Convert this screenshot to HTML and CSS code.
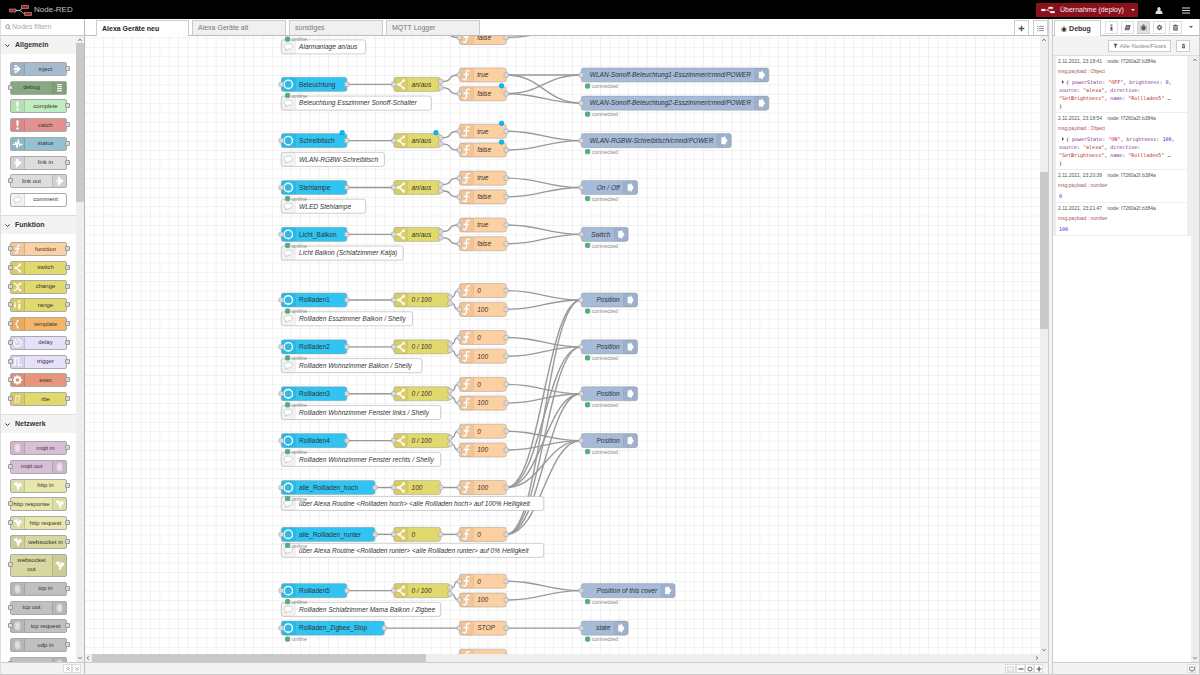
FILE: index.html
```html
<!DOCTYPE html>
<html lang="de">
<head>
<meta charset="utf-8">
<title>Node-RED</title>
<link rel="stylesheet" href="styles.css">
</head>
<body>
<svg class="sprite" aria-hidden="true">
  <symbol id="i-inject" viewBox="0 0 30 30"><path fill="currentColor" d="M8 5h5v5H8zM8 20h5v5H8zM6 12h8V6l9 9-9 9v-6H6z"/></symbol>
  <symbol id="i-debug" viewBox="0 0 30 30"><path fill="currentColor" d="M9 5h12v3H9zM9 10h12v3H9zM9 15h12v3H9zM9 20h12v4H9z" opacity=".85"/></symbol>
  <symbol id="i-alert" viewBox="0 0 30 30"><path fill="currentColor" d="M12 4h6l-1 14h-4zM12 21h6v5h-6z"/></symbol>
  <symbol id="i-status" viewBox="0 0 30 30"><path fill="none" stroke="currentColor" stroke-width="3" stroke-linejoin="round" d="M3 16h6l2-6 3 14 3-20 3 16 2-4h6"/></symbol>
  <symbol id="i-link" viewBox="0 0 30 30"><path fill="currentColor" d="M10 4c5 0 8 3 9 7h5v7h-5c-1 5-4 8-9 8l2-4-3-2 4-3H7v-4h6l-4-3 3-2z"/></symbol>
  <symbol id="i-comment" viewBox="0 0 30 30"><path fill="#fff" stroke="#ccc" stroke-width="2" d="M15 8c6 0 9 3 9 6s-4 6-9 6l-6 3 1-4c-3-1-4-3-4-5 0-3 4-6 9-6z"/></symbol>
  <symbol id="i-function" viewBox="0 0 30 30"><path fill="none" stroke="currentColor" stroke-width="3" d="M22 6c-4-2-7 0-7 4v11c0 4-3 5-7 3M9 14h11"/></symbol>
  <symbol id="i-switch" viewBox="0 0 30 30"><path fill="none" stroke="currentColor" stroke-width="3" d="M5 15h6c6 0 3-8 12-8M11 15c6 0 3 8 12 8"/><path fill="currentColor" d="M9 12h4v6H9zM19 4h4v6h-4zM19 20h4v6h-4z"/></symbol>
  <symbol id="i-change" viewBox="0 0 30 30"><path fill="none" stroke="currentColor" stroke-width="3" d="M6 7h4c5 0 6 16 11 16h2M6 23h4c5 0 6-16 11-16h2"/><path fill="currentColor" d="M20 3l6 4-6 4zM20 19l6 4-6 4z"/></symbol>
  <symbol id="i-range" viewBox="0 0 30 30"><path fill="currentColor" d="M7 8h4v3H7zM7 13h4v8H7zM17 4h5v5h-5zM17 12h5v13h-5z"/></symbol>
  <symbol id="i-template" viewBox="0 0 30 30"><path fill="none" stroke="currentColor" stroke-width="3" d="M19 5c-4 0-5 1-5 4s0 5-4 6c4 1 4 3 4 6s1 4 5 4"/></symbol>
  <symbol id="i-delay" viewBox="0 0 30 30"><path fill="none" stroke="currentColor" stroke-width="3" d="M15 6a9 9 0 1 1-8 5M8 6l7 9"/></symbol>
  <symbol id="i-trigger" viewBox="0 0 30 30"><path fill="none" stroke="currentColor" stroke-width="3" d="M4 23h5V6h9v17h8"/></symbol>
  <symbol id="i-gear" viewBox="0 0 30 30"><circle cx="15" cy="15" r="7" fill="none" stroke="currentColor" stroke-width="5"/><path stroke="currentColor" stroke-width="4" d="M15 3v5M15 22v5M3 15h5M22 15h5M7 7l3 3M20 20l3 3M23 7l-3 3M10 20l-3 3"/></symbol>
  <symbol id="i-rbe" viewBox="0 0 30 30"><path fill="none" stroke="currentColor" stroke-width="2" d="M7 23h4V7h12M13 23h6V7"/></symbol>
  <symbol id="i-waves" viewBox="0 0 30 30"><path fill="none" stroke="currentColor" stroke-width="2" opacity=".8" d="M15 4c4 6 4 16 0 22c-4-6-4-16 0-22zM15 9v12M19 6c3 6 3 12 0 18M11 6c-3 6-3 12 0 18"/></symbol>
  <symbol id="i-globe" viewBox="0 0 30 30"><path fill="currentColor" d="M6 9l5-4 5 2-1 3 3 1 2-5 5 4 1 6-4-1-2 5-3 6-3-2 1-5-4-2 2-3-4-2-3 1z"/></symbol>
  <symbol id="i-echo" viewBox="0 0 30 30"><circle cx="15" cy="15" r="9" fill="none" stroke="currentColor" stroke-width="3"/><path fill="currentColor" d="M12 22h6l-3 4z"/></symbol>
  <symbol id="i-bridge" viewBox="0 0 30 30"><path fill="currentColor" d="M9 8h6V4l7 11-7 11v-4H9z"/></symbol>
  <symbol id="i-bug" viewBox="0 0 16 16"><path fill="currentColor" d="M5 4a3 3 0 0 1 6 0zM4 5h8v6a4 4 0 0 1-8 0z"/><path stroke="currentColor" stroke-width="1.500" d="M1 4l3 3M15 4l-3 3M0 9h16M1 15l3-3M15 15l-3-3"/></symbol>
  <symbol id="i-trash" viewBox="0 0 16 16"><path fill="currentColor" d="M2 3h4V1h4v2h4v2H2zM3 6h10v9H3z"/><path stroke="#fff" d="M6 7v6M8 7v6M10 7v6"/></symbol>
  <symbol id="i-book" viewBox="0 0 16 16"><path fill="currentColor" d="M5 2h10l-3 12H2c-1 0-1-2 0-3z"/><path stroke="#fff" d="M6 5h6M5 8h6M3 12h8"/></symbol>
  <symbol id="i-flow" viewBox="0 0 46 22"><path fill="none" stroke="currentColor" stroke-width="2" d="M14 11h6c6 0 4-7 10-7M20 11c6 0 6 7 14 7"/><path class="logo-box" d="M1 8h13v6H1zM25 1h14v6H25zM31 15h14v6H31z"/></symbol>
  <symbol id="i-chev" viewBox="0 0 10 10"><path fill="none" stroke="currentColor" stroke-width="2" d="M1 3l4 4 4-4"/></symbol>
</svg>

<header class="topbar">
  <svg class="logo"><use href="#i-flow"/></svg>
  <span class="brand">Node-RED</span>
  <div class="top-actions">
    <button class="deploy"><svg class="deploy-icon"><use href="#i-flow"/></svg><span>Übernahme (deploy)</span><i class="caret"></i></button>
    <button class="top-btn" aria-label="Benutzer"><svg viewBox="0 0 16 16"><path fill="#ddd" d="M8 1a4 4 0 0 1 2 7c4 0 5 3 5 7H1c0-4 1-7 5-7a4 4 0 0 1 2-7z"/></svg></button>
    <button class="top-btn" aria-label="Menü"><svg viewBox="0 0 16 16"><path fill="#ddd" d="M0 2h16v2H0zM0 7h16v2H0zM0 12h16v2H0z"/></svg></button>
  </div>
</header>

<main class="main">
  <aside class="palette">
    <label class="search">
      <svg viewBox="0 0 16 16"><circle cx="7" cy="7" r="5" fill="none" stroke="#777" stroke-width="2"/><path stroke="#777" stroke-width="2" d="M10 10l5 5"/></svg>
      <input type="text" placeholder="Nodes filtern" aria-label="Nodes filtern">
    </label>
    <div class="palette-body">
      <div class="palette-scroll">
        <section class="category">
          <h2><svg><use href="#i-chev"/></svg>Allgemein</h2>
          <div class="items items-8">
            <div class="item inject out"><svg><use href="#i-inject"/></svg><span>inject</span></div>
            <div class="item debug in flip"><svg><use href="#i-debug"/></svg><span>debug</span></div>
            <div class="item complete out"><svg><use href="#i-alert"/></svg><span>complete</span></div>
            <div class="item catch out"><svg><use href="#i-alert"/></svg><span>catch</span></div>
            <div class="item status out"><svg><use href="#i-status"/></svg><span>status</span></div>
            <div class="item link out"><svg><use href="#i-link"/></svg><span>link in</span></div>
            <div class="item link in flip"><svg><use href="#i-link"/></svg><span>link out</span></div>
            <div class="item comment"><svg><use href="#i-comment"/></svg><span>comment</span></div>
          </div>
        </section>
        <section class="category">
          <h2><svg><use href="#i-chev"/></svg>Funktion</h2>
          <div class="items items-9">
            <div class="item function in out"><svg><use href="#i-function"/></svg><span>function</span></div>
            <div class="item switch in out"><svg><use href="#i-switch"/></svg><span>switch</span></div>
            <div class="item switch in out"><svg><use href="#i-change"/></svg><span>change</span></div>
            <div class="item switch in out"><svg><use href="#i-range"/></svg><span>range</span></div>
            <div class="item template in out"><svg><use href="#i-template"/></svg><span>template</span></div>
            <div class="item delay in out"><svg><use href="#i-delay"/></svg><span>delay</span></div>
            <div class="item delay in out"><svg><use href="#i-trigger"/></svg><span>trigger</span></div>
            <div class="item exec in out"><svg><use href="#i-gear"/></svg><span>exec</span></div>
            <div class="item switch in out"><svg><use href="#i-rbe"/></svg><span>rbe</span></div>
          </div>
        </section>
        <section class="category">
          <h2><svg><use href="#i-chev"/></svg>Netzwerk</h2>
          <div class="items items-12">
            <div class="item mqtt out"><svg><use href="#i-waves"/></svg><span>mqtt in</span></div>
            <div class="item mqtt in flip"><svg><use href="#i-waves"/></svg><span>mqtt out</span></div>
            <div class="item http out"><svg><use href="#i-globe"/></svg><span>http in</span></div>
            <div class="item http in flip"><svg><use href="#i-globe"/></svg><span>http response</span></div>
            <div class="item http in out"><svg><use href="#i-globe"/></svg><span>http request</span></div>
            <div class="item websocket out"><svg><use href="#i-globe"/></svg><span>websocket in</span></div>
            <div class="item websocket in flip tall"><svg><use href="#i-globe"/></svg><span>websocket<br>out</span></div>
            <div class="item tcp out"><svg><use href="#i-waves"/></svg><span>tcp in</span></div>
            <div class="item tcp in flip"><svg><use href="#i-waves"/></svg><span>tcp out</span></div>
            <div class="item tcp in out"><svg><use href="#i-waves"/></svg><span>tcp request</span></div>
            <div class="item tcp out"><svg><use href="#i-waves"/></svg><span>udp in</span></div>
            <div class="item tcp in flip"><svg><use href="#i-waves"/></svg></div>
          </div>
        </section>
      </div>
      <div class="vscroll"><svg class="up"><use href="#i-chev"/></svg><div class="track"><div class="thumb palette-thumb"></div></div><svg><use href="#i-chev"/></svg></div>
    </div>
    <footer class="foot">
      <button aria-label="Alle zuklappen"><svg viewBox="0 0 10 10"><path fill="none" stroke="#888" d="M2 5l3-3 3 3M2 8l3-3 3 3"/></svg></button>
      <button aria-label="Alle aufklappen"><svg viewBox="0 0 10 10"><path fill="none" stroke="#888" d="M2 2l3 3 3-3M2 5l3 3 3-3"/></svg></button>
    </footer>
  </aside>

  <section class="workspace">
    <nav class="tabs">
      <button class="tab active">Alexa Geräte neu</button>
      <button class="tab">Alexa Geräte alt</button>
      <button class="tab">sonstiges</button>
      <button class="tab">MQTT Logger</button>
      <span class="tab-tools">
        <button aria-label="Flow hinzufügen"><svg viewBox="0 0 10 10"><path stroke="#555" stroke-width="2" d="M1 5h8M5 1v8"/></svg></button>
        <button aria-label="Flows auflisten"><svg viewBox="0 0 10 10"><path stroke="#666" d="M0 2h2M3 2h7M0 5h2M3 5h7M0 8h2M3 8h7"/></svg></button>
      </span>
    </nav>
    <div class="canvas-row">
      <svg class="canvas" id="canvas">
        <defs><pattern id="grid" width="20" height="20" patternUnits="userSpaceOnUse"><path d="M0 0H20M0 0V20" class="grid-line"/></pattern></defs>
      </svg>
      <div class="vscroll"><svg class="up"><use href="#i-chev"/></svg><div class="track"><div class="thumb canvas-thumb"></div></div><svg><use href="#i-chev"/></svg></div>
    </div>
    <div class="hscroll"><svg class="left"><use href="#i-chev"/></svg><div class="track"><div class="thumb"></div></div><svg class="right"><use href="#i-chev"/></svg></div>
    <footer class="foot">
      <button class="map" aria-label="Navigator"><svg viewBox="0 0 16 10"><path fill="#eef3f8" stroke="#9ab" stroke-dasharray="3 1" d="M2 1h12v8H2z"/></svg></button>
      <button aria-label="Verkleinern"><svg viewBox="0 0 10 10"><path stroke="#555" stroke-width="2" d="M1 5h8"/></svg></button>
      <button aria-label="Originalgröße"><svg viewBox="0 0 10 10"><circle cx="5" cy="5" r="3.500" fill="none" stroke="#555" stroke-width="1.500"/></svg></button>
      <button aria-label="Vergrößern"><svg viewBox="0 0 10 10"><path stroke="#555" stroke-width="2" d="M1 5h8M5 1v8"/></svg></button>
    </footer>
  </section>

  <div class="separator"></div>

  <aside class="sidebar">
    <nav class="side-tabs">
      <button class="side-tab"><svg><use href="#i-bug"/></svg>Debug</button>
      <span class="side-icons">
        <button aria-label="Information"><svg viewBox="0 0 16 16"><path fill="#555" d="M6 1h4v3H6zM5 6h5v7h1v2H5v-2h1V8H5z"/></svg></button>
        <button aria-label="Hilfe"><svg><use href="#i-book"/></svg></button>
        <button class="on" aria-label="Debug"><svg><use href="#i-bug"/></svg></button>
        <button aria-label="Konfiguration"><svg><use href="#i-gear"/></svg></button>
        <button aria-label="Kontext"><svg><use href="#i-trash"/></svg></button>
      </span>
      <button class="side-caret" aria-label="Mehr"><i class="caret"></i></button>
    </nav>
    <div class="debug-tools">
      <button><svg viewBox="0 0 16 16"><path fill="#555" d="M1 1h14l-5 6v8l-4-3V7z"/></svg>Alle Nodes/Flows</button>
      <button class="clear" aria-label="Löschen"><svg><use href="#i-trash"/></svg></button>
    </div>
    <div class="debug-body">
      <div class="messages">
        <article class="msg">
          <p class="meta"><span>2.11.2021, 23:18:41</span><span>node: f7260a2f.b384a</span></p>
          <p class="topic">msg.payload : Object</p>
          <div class="payload"><div class="first"><i class="tri"></i>{ <b>powerState</b>: <q>"OFF"</q>, <b>brightness</b>: <var>0</var>,</div><div><b>source</b>: <q>"alexa"</q>, <b>directive</b>:</div><div><q>"SetBrightness"</q>, <b>name</b>: <q>"Rollladen5"</q> …</div><div>}</div></div>
        </article>
        <article class="msg">
          <p class="meta"><span>2.11.2021, 23:18:54</span><span>node: f7260a2f.b384a</span></p>
          <p class="topic">msg.payload : Object</p>
          <div class="payload"><div class="first"><i class="tri"></i>{ <b>powerState</b>: <q>"ON"</q>, <b>brightness</b>: <var>100</var>,</div><div><b>source</b>: <q>"alexa"</q>, <b>directive</b>:</div><div><q>"SetBrightness"</q>, <b>name</b>: <q>"Rollladen5"</q> …</div><div>}</div></div>
        </article>
        <article class="msg">
          <p class="meta"><span>2.11.2021, 23:20:39</span><span>node: f7260a2f.b384a</span></p>
          <p class="topic">msg.payload : number</p>
          <div class="payload"><var>0</var></div>
        </article>
        <article class="msg">
          <p class="meta"><span>2.11.2021, 23:21:47</span><span>node: f7260a2f.b384a</span></p>
          <p class="topic">msg.payload : number</p>
          <div class="payload"><var>100</var></div>
        </article>
      </div>
      <div class="vscroll"><svg class="up"><use href="#i-chev"/></svg><div class="track"></div><svg><use href="#i-chev"/></svg></div>
    </div>
    <footer class="foot"><button aria-label="Fenster"><svg viewBox="0 0 16 14"><path fill="none" stroke="#666" stroke-width="2" d="M1 2h14v8H1zM5 13h6"/></svg></button></footer>
  </aside>
</main>
<script src="flow.js"></script>
</body>
</html>
```
FILE: styles.css
```css
*, *::before, *::after { box-sizing: border-box; }
body {
  margin: 0;
  height: 100vh;
  display: flex;
  flex-direction: column;
  overflow: hidden;
  font: 7px/10px "Liberation Sans", Arial, sans-serif;
  color: #444;
  background: #f3f3f3;
}
button {
  font: inherit;
  color: inherit;
  margin: 0;
  padding: 0;
  border: 1px solid #ccc;
  background: #fff;
  display: flex;
  align-items: center;
  justify-content: center;
}
h2, p { margin: 0; }
svg { display: block; flex: none; }
.sprite { width: 0; height: 0; position: absolute; }

/* header */
.topbar {
  flex: none;
  height: 19px;
  background: #000;
  display: flex;
  align-items: center;
  padding: 1px 8px 0 9px;
}
.logo { width: 23px; height: 11px; color: #bbb; }
.logo-box { fill: #b22222; stroke: #ccc; }
.brand { margin-left: 2px; font-size: 8px; color: #c7c7c7; }
.top-actions { margin-left: auto; display: flex; align-items: center; }
.deploy { height: 14px; width: 102px; background: #8c101c; border: 0; color: #eee; gap: 5px; margin-right: 15px; justify-content: flex-start; padding-left: 5px; }
.deploy-icon { width: 14px; height: 8px; color: #fff; }
.deploy-icon { --box: #fff; }
.deploy-icon use { fill: #fff; }
.deploy .caret { margin-left: 2px; border-top-color: #eee; }
.caret { width: 0; height: 0; border: 2px solid transparent; border-top: 2px solid #555; border-bottom: 0; }
.logo { --box: #b22222; }
.logo-box { fill: var(--box); }
.top-btn { border: 0; background: none; width: 12px; height: 12px; }
.top-btn svg { width: 8px; height: 9px; }
.top-btn + .top-btn { margin-left: 15px; }

.main { flex: 1; min-height: 0; display: flex; border-bottom: 1px solid #ccc; }

/* palette */
.palette { flex: none; width: 85px; display: flex; flex-direction: column; border-right: 1px solid #bbb; border-left: 1px solid #ddd; background: #fff; }
.search { flex: none; height: 17px; display: flex; align-items: center; gap: 1px; padding-left: 4px; border-bottom: 1px solid #ccc; }
.search svg { width: 6px; height: 6px; }
.search input { border: 0; padding: 0; width: 60px; font: inherit; background: none; outline: 0; }
.search input::placeholder { color: #aaa; opacity: 1; }
.palette-body { flex: 1; min-height: 0; display: flex; }
.palette-scroll { flex: 1; overflow: hidden; }
.category { border-bottom: 1px solid #ddd; }
.category h2 { height: 18px; display: flex; align-items: center; gap: 5px; padding-left: 4px; background: #f3f3f3; font-size: 7px; color: #333; }
.category h2 svg { width: 5px; height: 5px; }
.items { display: flex; flex-direction: column; justify-content: space-between; margin: 8px 8px 8px 9px; }
.items-8 { height: 145px; }
.items-9 { height: 164px; }
.items-12 { height: 230px; }
.item { position: relative; flex: none; height: 14px; width: 57px; display: flex; border: 1px solid #aaa; border-radius: 2px; color: #fff; }
.item span { flex: 1; align-self: center; text-align: center; font-size: 6px; line-height: 9px; color: #333; white-space: nowrap; margin: 0 -4px; z-index: 1; }
.item svg { width: 14px; height: 100%; background: rgba(0, 0, 0, .05); border-right: 1px solid rgba(0, 0, 0, .1); }
.item.flip { flex-direction: row-reverse; }
.item.flip svg { border-right: 0; border-left: 1px solid rgba(0, 0, 0, .1); }
.item.tall { height: 23px; }
.item.in::before, .item.out::after { content: ""; position: absolute; top: 50%; width: 5px; height: 5px; margin-top: -3px; background: #d9d9d9; border: 1px solid #999; border-radius: 1px; }
.item.in::before { left: -3px; }
.item.out::after { right: -4px; }
.inject { background: #a6bbcf; }
.debug { background: #87a980; }
.complete { background: #c0edc0; }
.catch { background: #e49191; }
.status { background: #94c1d0; }
.link { background: #ddd; }
.comment { background: #fff; }
.function { background: #fdd0a2; }
.switch { background: #e2d96e; }
.template { background: #f3b567; }
.delay { background: #e6e0f8; }
.exec { background: #e7967c; }
.mqtt { background: #d8bfd8; }
.http { background: #e7e7ae; }
.websocket { background: #d7d7a0; }
.tcp { background: #c0c0c0; }

/* scrollbars */
.vscroll { flex: none; width: 8px; display: flex; flex-direction: column; align-items: center; background: #eee; padding: 1px 0; }
.vscroll svg, .hscroll svg { width: 4px; height: 6px; color: #444; }
.vscroll .up { transform: rotate(180deg); }
.vscroll .track { flex: 1; align-self: stretch; }
.thumb { background: #c9c9c9; }
.palette-thumb { height: 26%; }
.canvas-thumb { height: 26%; margin-top: 129px; }
.hscroll { flex: none; height: 8px; display: flex; align-items: center; background: #eee; padding: 0 9px 0 1px; }
.hscroll .track { flex: 1; height: 100%; margin: 0 2px; }
.hscroll .thumb { width: 334px; height: 100%; }
.hscroll .left { transform: rotate(90deg); }
.hscroll .right { transform: rotate(-90deg); }

.foot { flex: none; height: 12px; display: flex; align-items: center; justify-content: flex-end; border-top: 1px solid #ccc; background: #f3f3f3; padding-right: 3px; }
.foot button { width: 9px; height: 9px; border-color: #ddd; }
.foot svg { width: 6px; height: 6px; }

/* workspace */
.workspace { flex: 1; min-width: 0; display: flex; flex-direction: column; background: #fff; }
.workspace .foot { padding-right: 5px; }
.foot .map { width: 11px; }
.foot .map svg { width: 9px; }
.tabs { flex: none; height: 17px; display: flex; align-items: flex-end; gap: 3px; padding-left: 11px; border-bottom: 1px solid #bbb; }
.tab { width: 94px; height: 15px; justify-content: flex-start; padding-left: 5px; border-bottom: 0; background: #f0f0f0; color: #777; }
.tab.active { background: #fff; color: #222; font-weight: bold; height: 16px; margin-bottom: -1px; width: 93px; }
.tab-tools { margin-left: auto; display: flex; gap: 4px; }
.tab-tools button { width: 15px; height: 15px; border-bottom: 0; }
.tab-tools svg { width: 7px; height: 7px; }
.canvas-row { flex: 1; min-height: 0; display: flex; }
.canvas { flex: 1; min-width: 0; width: 0; height: 100%; }
.grid-line { stroke: #e4e4e4; stroke-width: 2; fill: none; }
.wire { fill: none; stroke: #999; stroke-width: 3; }
.node { color: #fff; }
.node .box { stroke: #999; }
.node .shade { fill: #000; fill-opacity: .05; }
.node .edge { stroke: #000; stroke-opacity: .12; }
.node .port { fill: #d9d9d9; stroke: #999; }
.node .label { font-size: 14px; fill: #333; font-style: italic; }
.node .flip { text-anchor: end; }
.node .changed { fill: #00bcff; stroke: #0088c4; }
.node .dot { fill: #5a8; stroke: #5a8; stroke-width: 2; }
.node .state { font-size: 12px; fill: #888; }
.echo .box { fill: #30c4f2; }
.echo .label { font-style: normal; }
.branch .box { fill: #e2d96e; }
.fn .box { fill: #fdd0a2; }
.send .box { fill: #a6bbd7; }
.note .box { fill: #fff; }

/* debug sidebar */
.separator { flex: none; width: 5px; border: 1px solid #ccc; border-width: 0 1px; background: #f3f3f3; }
.sidebar { flex: none; width: 147px; display: flex; flex-direction: column; background: #fff; border-right: 1px solid #ccc; }
.side-tabs { flex: none; height: 17px; display: flex; align-items: flex-end; border-bottom: 1px solid #bbb; padding-left: 1px; }
.side-tab { width: 47px; height: 16px; margin-bottom: -1px; border-bottom: 0; font-weight: bold; color: #333; gap: 2px; padding-right: 3px; }
.side-tab svg { width: 6px; height: 6px; }
.side-icons { display: flex; gap: 3px; margin-left: 4px; align-self: center; }
.side-icons button { width: 13px; height: 13px; color: #555; border-color: #ddd; }
.side-icons svg { width: 7px; height: 7px; }
.side-icons .on { background: #e2e2e2; border-color: #ccc; }
.side-caret { margin: 0 6px 0 auto; border: 0; align-self: center; }
.debug-tools { flex: none; height: 20px; display: flex; align-items: center; justify-content: flex-end; gap: 5px; padding-right: 9px; background: #f3f3f3; border-bottom: 1px solid #ddd; }
.debug-tools button { width: 63px; height: 12px; gap: 2px; font-size: 6px; color: #888; }
.debug-tools svg { width: 5px; height: 6px; color: #555; }
.debug-tools .clear { width: 14px; }
.debug-body { flex: 1; min-height: 0; display: flex; }
.messages { flex: 1; min-width: 0; }
.msg { border: solid #eee; border-width: 0 4px 1px 3px; padding: 1px 0 2px 2px; font-size: 5px; }
.meta { display: flex; gap: 5px; line-height: 9px; color: #555; }
.topic { line-height: 10px; color: #a55; }
.payload { margin: 2px 0 0 1px; font: 5px/8px "DejaVu Sans Mono", monospace; color: #333; white-space: nowrap; }
.payload .first { display: flex; align-items: center; white-space: pre; }
.tri { border: 2px solid transparent; border-left: 2px solid #555; border-right: 0; margin: 0 2px 0 3px; }
.payload b { font-weight: normal; color: #792e90; }
.payload q { quotes: none; color: #b72828; }
.payload var { font-style: normal; color: #2033d6; }
```
FILE: flow.js
```js
const NS = "http://www.w3.org/2000/svg";
const ZOOM = 0.46875;
const SCROLL = { x: 85, y: 36 };

// type, left, centre y, width, label, options
const nodes = [
  ["note", 600, 100, 180, "Alarmanlage an/aus"],
  ["note", 600, 220, 320, "Beleuchtung Esszimmer Sonoff-Schalter"],
  ["note", 600, 340, 220, "WLAN-RGBW-Schreibtisch"],
  ["note", 600, 440, 180, "WLED Stehlampe"],
  ["note", 600, 540, 260, "Licht Balkon (Schlafzimmer Katja)"],
  ["note", 600, 680, 280, "Rollladen Esszimmer Balkon / Shelly"],
  ["note", 600, 780, 300, "Rollladen Wohnzimmer Balkon / Shelly"],
  ["note", 600, 880, 340, "Rollladen Wohnzimmer Fenster links / Shelly"],
  ["note", 600, 980, 340, "Rollladen Wohnzimmer Fenster rechts / Shelly"],
  ["note", 600, 1074, 560, "über Alexa Routine <Rollladen hoch> <alle Rollladen hoch> auf 100% Helligkeit"],
  ["note", 600, 1174, 560, "über Alexa Routine <Rollladen runter> <alle Rollladen runter> auf 0% Helligkeit"],
  ["note", 600, 1300, 340, "Rollladen Schlafzimmer Mama Balkon / Zigbee"],

  ["echo", 600, 60, 140, "", { state: "online" }],
  ["echo", 600, 180, 140, "Beleuchtung", { state: "online" }],
  ["echo", 600, 300, 140, "Schreibtisch", { changed: true }],
  ["echo", 600, 400, 140, "Stehlampe", { state: "online" }],
  ["echo", 600, 500, 140, "Licht_Balkon", { state: "online" }],
  ["echo", 600, 640, 140, "Rollladen1", { state: "online" }],
  ["echo", 600, 740, 140, "Rollladen2", { state: "online" }],
  ["echo", 600, 840, 140, "Rollladen3", { state: "online" }],
  ["echo", 600, 940, 140, "Rollladen4", { state: "online" }],
  ["echo", 600, 1040, 200, "alle_Rollladen_hoch", { state: "online" }],
  ["echo", 600, 1140, 200, "alle_Rollladen_runter", { state: "online" }],
  ["echo", 600, 1260, 140, "Rollladen5", { state: "online" }],
  ["echo", 600, 1340, 220, "Rollladen_Zigbee_Stop", { state: "online" }],

  ["branch", 840, 180, 100, "an/aus", { outs: 2 }],
  ["branch", 840, 300, 100, "an/aus", { outs: 2, changed: true }],
  ["branch", 840, 400, 100, "an/aus", { outs: 2 }],
  ["branch", 840, 500, 100, "an/aus", { outs: 2 }],
  ["branch", 840, 640, 120, "0 / 100", { outs: 2 }],
  ["branch", 840, 740, 120, "0 / 100", { outs: 2 }],
  ["branch", 840, 840, 120, "0 / 100", { outs: 2 }],
  ["branch", 840, 940, 120, "0 / 100", { outs: 2 }],
  ["branch", 840, 1040, 100, "100"],
  ["branch", 840, 1140, 100, "0"],
  ["branch", 840, 1260, 120, "0 / 100", { outs: 2 }],

  ["fn", 980, 80, 100, "false"],
  ["fn", 980, 160, 100, "true"],
  ["fn", 980, 200, 100, "false", { changed: true }],
  ["fn", 980, 280, 100, "true", { changed: true }],
  ["fn", 980, 320, 100, "false", { changed: true }],
  ["fn", 980, 380, 100, "true"],
  ["fn", 980, 420, 100, "false"],
  ["fn", 980, 480, 100, "true"],
  ["fn", 980, 520, 100, "false"],
  ["fn", 980, 620, 100, "0"],
  ["fn", 980, 660, 100, "100"],
  ["fn", 980, 720, 100, "0"],
  ["fn", 980, 760, 100, "100"],
  ["fn", 980, 820, 100, "0"],
  ["fn", 980, 860, 100, "100"],
  ["fn", 980, 920, 100, "0"],
  ["fn", 980, 960, 100, "100"],
  ["fn", 980, 1040, 100, "100"],
  ["fn", 980, 1140, 100, "0"],
  ["fn", 980, 1240, 100, "0"],
  ["fn", 980, 1280, 100, "100"],
  ["fn", 980, 1340, 100, "STOP"],
  ["fn", 980, 1400, 100, "0"],

  ["send", 1240, 160, 400, "WLAN-Sonoff-Beleuchtung1-Esszimmer/cmnd/POWER", { state: "connected" }],
  ["send", 1240, 220, 400, "WLAN-Sonoff-Beleuchtung2-Esszimmer/cmnd/POWER", { state: "connected" }],
  ["send", 1240, 300, 320, "WLAN-RGBW-Schreibtisch/cmnd/POWER", { state: "connected" }],
  ["send", 1240, 400, 120, "On / Off", { state: "connected" }],
  ["send", 1240, 500, 100, "Switch", { state: "connected" }],
  ["send", 1240, 640, 120, "Position", { state: "connected" }],
  ["send", 1240, 740, 120, "Position", { state: "connected" }],
  ["send", 1240, 840, 120, "Position", { state: "connected" }],
  ["send", 1240, 940, 120, "Position", { state: "connected" }],
  ["send", 1240, 1260, 200, "Position of this cover", { state: "connected" }],
  ["send", 1240, 1340, 100, "state", { state: "connected" }]
];

const wires = [[940, 67, 980, 80], [1080, 80, 1240, 60]];
// one output each for true and false, joined again at the target
for (const y of [180, 300, 400, 500]) {
  wires.push([740, y, 840, y], [940, y - 6, 980, y - 20], [940, y + 7, 980, y + 20]);
}
for (const y of [640, 740, 840, 940, 1260]) {
  wires.push([740, y, 840, y], [960, y - 6, 980, y - 20], [960, y + 7, 980, y + 20]);
}
for (const y of [300, 400, 500, 640, 740, 840, 940, 1260]) {
  wires.push([1080, y - 20, 1240, y], [1080, y + 20, 1240, y]);
}
for (const from of [160, 200]) for (const to of [160, 220]) wires.push([1080, from, 1240, to]);
for (const y of [1040, 1140]) {
  wires.push([800, y, 840, y], [940, y, 980, y]);
  for (const to of [640, 740, 840, 940]) wires.push([1080, y, 1240, to]);
}
wires.push([820, 1340, 980, 1340], [1080, 1340, 1240, 1340]);

const icons = { echo: "echo", branch: "switch", fn: "function", send: "bridge", note: "comment" };

function add(parent, tag, attrs, text) {
  const el = document.createElementNS(NS, tag);
  for (const key in attrs) el.setAttribute(key, attrs[key]);
  if (text) el.textContent = text;
  parent.appendChild(el);
  return el;
}

function drawWire(layer, [x1, y1, x2, y2]) {
  const length = Math.hypot(x2 - x1, y2 - y1);
  const bend = 75 * Math.min(1, length / 100);
  add(layer, "path", { class: "wire", d: `M${x1} ${y1}C${x1 + bend} ${y1} ${x2 - bend} ${y2} ${x2} ${y2}` });
}

function drawNode(layer, [type, x, cy, w, label, opts = {}]) {
  const g = add(layer, "g", { class: `node ${type}`, transform: `translate(${x} ${cy - 15})` });
  const right = type === "send";
  const iconX = right ? w - 30 : 0;
  add(g, "rect", { class: "box", width: w, height: 30, rx: 5 });
  add(g, "rect", { class: "shade", x: iconX, width: 30, height: 30, rx: 5 });
  add(g, "path", { class: "edge", d: right ? `M${w - 30} 1V29` : "M30 1V29" });
  add(g, "use", { href: `#i-${icons[type]}`, x: iconX, width: 30, height: 30 });
  if (label) add(g, "text", { class: right ? "label flip" : "label", x: right ? w - 38 : 38, y: 20 }, label);
  const port = (px, py) => add(g, "rect", { class: "port", x: px - 5, y: py - 5, width: 10, height: 10, rx: 3 });
  if (type !== "note") {
    port(0, 15);
    if (opts.outs === 2) { port(w, 9); port(w, 22); }
    else if (!right) port(w, 15);
  }
  if (opts.changed) add(g, "circle", { class: "changed", cx: w - 10, cy: -2, r: 5 });
  if (opts.state) {
    add(g, "rect", { class: "dot", x: 9, y: 34, width: 9, height: 9, rx: 2 });
    add(g, "text", { class: "state", x: 23, y: 43 }, opts.state);
  }
}

const canvas = document.getElementById("canvas");
const view = add(canvas, "g", { transform: `translate(${-SCROLL.x} ${-SCROLL.y}) scale(${ZOOM})` });
add(view, "rect", { width: 8000, height: 8000, fill: "url(#grid)" });
wires.forEach(wire => drawWire(view, wire));
nodes.forEach(node => drawNode(view, node));
```
